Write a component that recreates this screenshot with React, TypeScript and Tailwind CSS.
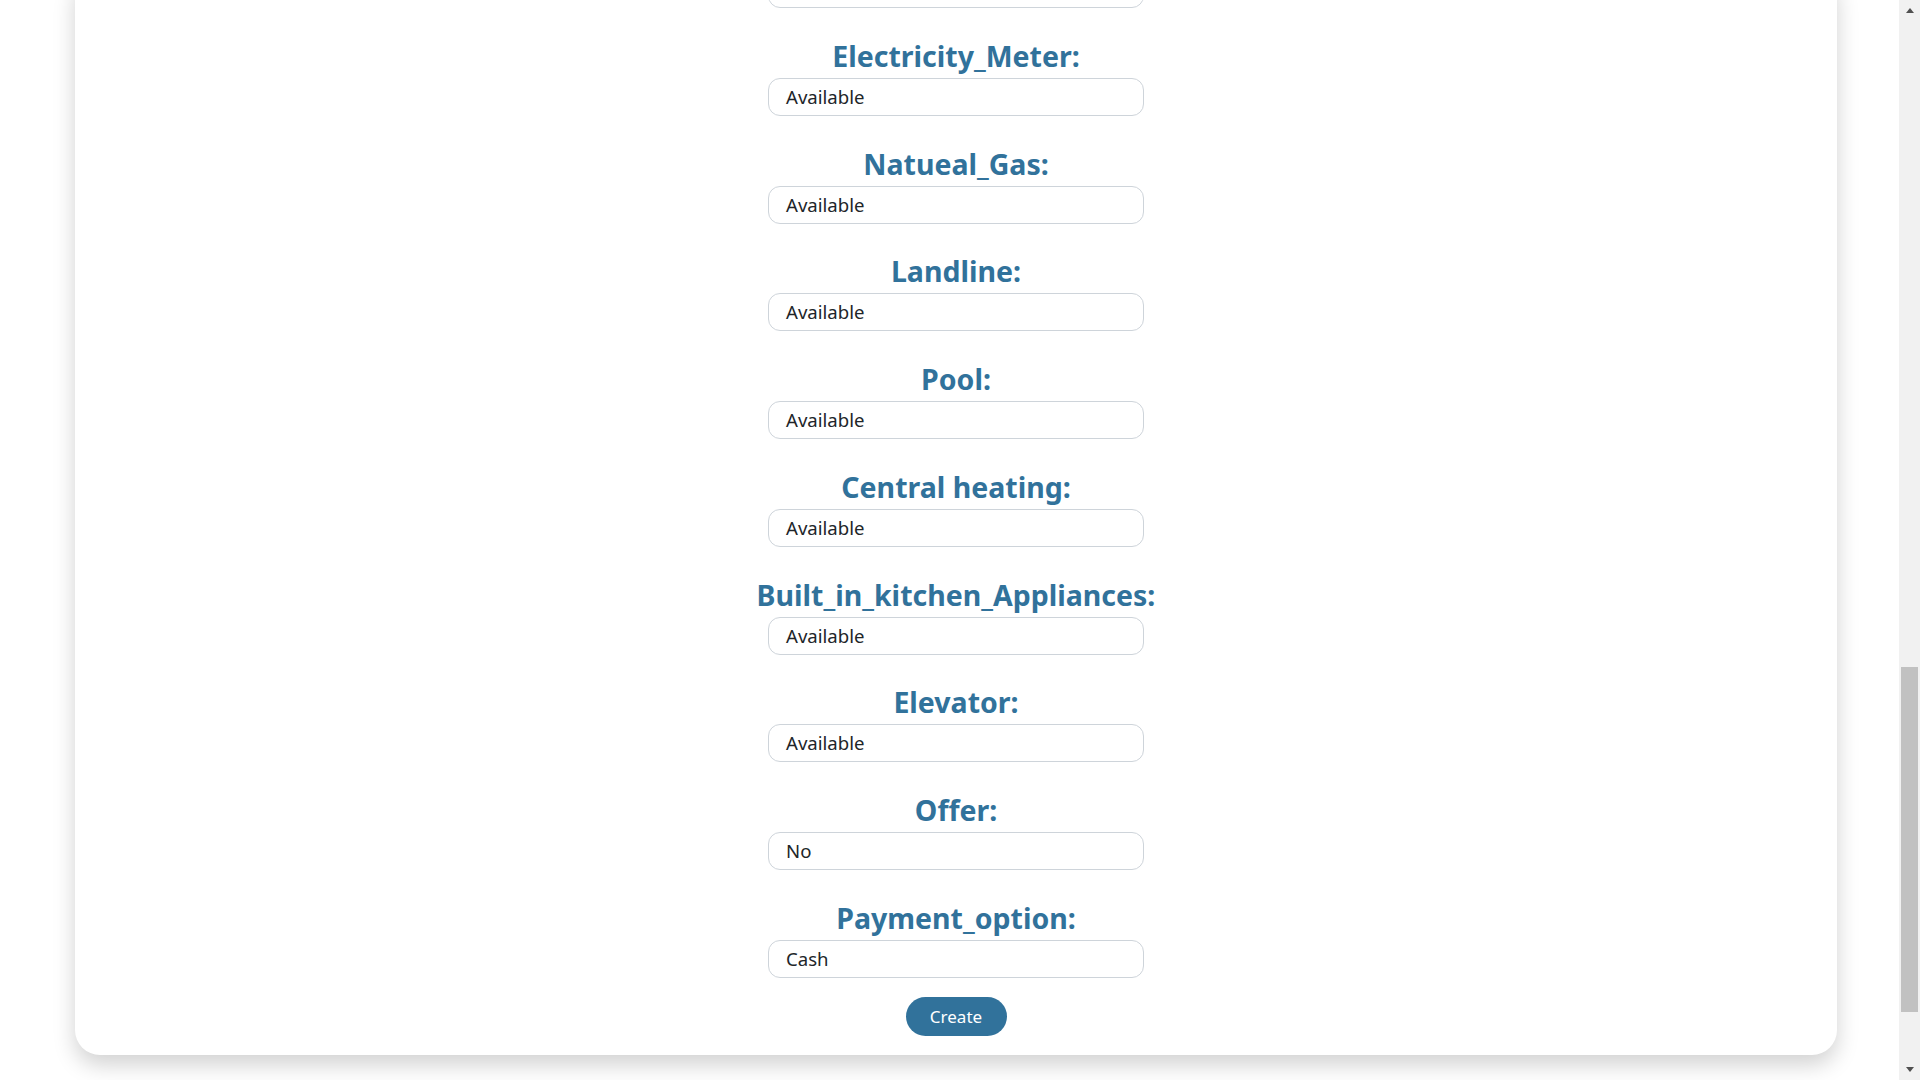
import React from "react";

const fields: { label: string; value: string }[] = [
  { label: "Electricity_Meter:", value: "Available" },
  { label: "Natueal_Gas:", value: "Available" },
  { label: "Landline:", value: "Available" },
  { label: "Pool:", value: "Available" },
  { label: "Central heating:", value: "Available" },
  { label: "Built_in_kitchen_Appliances:", value: "Available" },
  { label: "Elevator:", value: "Available" },
  { label: "Offer:", value: "No" },
  { label: "Payment_option:", value: "Cash" },
];

function Field({ label, value }: { label: string; value: string }) {
  return (
    <div className="flex flex-col items-center mt-[29.75px]">
      <div className="text-[28.5px] leading-[36px] font-bold text-[#31729b] mb-[4px]">{label}</div>
      <div className="w-[376px] h-[38px] rounded-[12px] border border-[#ced4da] bg-white flex items-center pl-[17px] text-[18.6px] text-[#212529]">
        {value}
      </div>
    </div>
  );
}

export default function App() {
  return (
    <div className="w-[1920px] h-[1080px] overflow-hidden bg-white flex" style={{ fontFamily: '"Noto Sans", "Open Sans", sans-serif' }}>
      <div className="w-[1899px] h-[1080px] overflow-hidden">
        <div className="ml-[75px] w-[1762px] -mt-[30px] bg-white rounded-[25px] shadow-[0_10px_22px_rgba(0,0,0,0.18)] flex flex-col items-center pb-[19px]">
          <div className="w-[376px] h-[38px] rounded-[12px] border border-[#ced4da] bg-white" />
          {fields.map((f) => (
            <Field key={f.label} label={f.label} value={f.value} />
          ))}
          <button className="mt-[19px] w-[101px] h-[39px] rounded-full bg-[#31729b] text-white text-[17px]">
            Create
          </button>
        </div>
      </div>
      <div className="w-[21px] h-[1080px] bg-[#f1f1f1] flex flex-col items-center">
        <div className="h-[21px] flex items-center justify-center">
          <div className="w-0 h-0 border-l-[4.5px] border-r-[4.5px] border-b-[5px] border-l-transparent border-r-transparent border-b-[#505050]" />
        </div>
        <div className="flex-1 w-full flex flex-col items-center">
          <div className="h-[646px]" />
          <div className="w-[17px] h-[345px] bg-[#c1c1c1]" />
        </div>
        <div className="h-[21px] flex items-center justify-center">
          <div className="w-0 h-0 border-l-[4.5px] border-r-[4.5px] border-t-[5px] border-l-transparent border-r-transparent border-t-[#505050]" />
        </div>
      </div>
    </div>
  );
}
